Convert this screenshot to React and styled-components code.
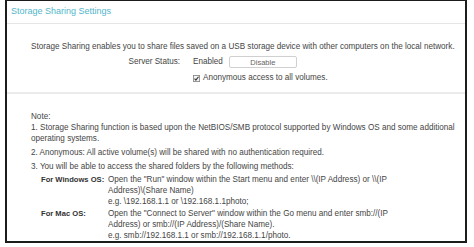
import React from 'react'
import styled, { createGlobalStyle } from 'styled-components'

const GlobalStyle = createGlobalStyle`
  html, body {
    margin: 0;
    padding: 0;
    background: #ffffff;
  }
  body {
    font-family: "Liberation Sans", Arial, sans-serif;
    color: #454545;
  }
`

const notes = [
  '1. Storage Sharing function is based upon the NetBIOS/SMB protocol supported by Windows OS and some additional operating systems.',
  '2. Anonymous: All active volume(s) will be shared with no authentication required.',
  '3. You will be able to access the shared folders by the following methods:',
]

const methods = [
  {
    os: 'For Windows OS:',
    lines: [
      'Open the "Run" window within the Start menu and enter \\\\(IP Address) or \\\\(IP',
      'Address)\\(Share Name)',
      'e.g. \\192.168.1.1 or \\192.168.1.1photo;',
    ],
  },
  {
    os: 'For Mac OS:',
    lines: [
      'Open the "Connect to Server" window within the Go menu and enter smb://(IP',
      'Address) or smb://(IP Address)/(Share Name).',
      'e.g. smb://192.168.1.1 or smb://192.168.1.1/photo.',
    ],
  },
]

export default function App() {
  return (
    <>
      <GlobalStyle />
      <Frame>
        <Header>
          <Title>Storage Sharing Settings</Title>
        </Header>
        <Settings>
          <Description>
            Storage Sharing enables you to share files saved on a USB storage device with other computers on the local network.
          </Description>
          <StatusGrid>
            <Label>Server Status:</Label>
            <StatusValue>
              <span>Enabled</span>
              <Button type="button">Disable</Button>
            </StatusValue>
            <span />
            <CheckRow>
              <CheckBox viewBox="0 0 8 8">
                <rect x="0.5" y="0.5" width="7" height="7" fill="#f4f4f4" stroke="#8a8a8a" />
                <path d="M1.8 4.2 L3.3 5.8 L6.3 2" fill="none" stroke="#333" strokeWidth="1.3" />
              </CheckBox>
              <span>Anonymous access to all volumes.</span>
            </CheckRow>
          </StatusGrid>
        </Settings>
        <Notes>
          <NoteTitle>Note:</NoteTitle>
          {notes.map((n, i) => (
            <NoteItem key={i} first={i === 0}>{n}</NoteItem>
          ))}
          <MethodGrid>
            {methods.map((m) => (
              <React.Fragment key={m.os}>
                <OsName>{m.os}</OsName>
                <MethodText>
                  {m.lines.map((l, i) => (
                    <div key={i}>{l}</div>
                  ))}
                </MethodText>
              </React.Fragment>
            ))}
          </MethodGrid>
        </Notes>
      </Frame>
    </>
  )
}

const Frame = styled.div`
  box-sizing: border-box;
  margin-left: 5px;
  width: 462px;
  height: 243px;
  border: 2px solid #1c1c1c;
  border-top-width: 1px;
  display: flex;
  flex-direction: column;
  overflow: hidden;
  font-size: 8.15px;
`

const Header = styled.div`
  height: 25px;
  padding-left: 4px;
  border-bottom: 1px solid #e6e6e6;
  box-sizing: border-box;
`

const Title = styled.div`
  font-size: 9px;
  line-height: 20px;
  color: #52b6c9;
`

const Settings = styled.div`
  padding: 17px 0 8px 24px;
  border-bottom: 2px solid #ebebeb;
`

const Description = styled.div`
  line-height: 12px;
  white-space: nowrap;
`

const StatusGrid = styled.div`
  display: grid;
  grid-template-columns: 149px auto;
  column-gap: 13px;
  row-gap: 3px;
  margin-top: 2px;
  align-items: center;
`

const Label = styled.div`
  text-align: right;
  line-height: 14px;
`

const StatusValue = styled.div`
  display: flex;
  align-items: center;
  gap: 6px;
  line-height: 14px;
`

const Button = styled.button`
  width: 68px;
  height: 12px;
  padding: 0;
  border: 1px solid #d0d0d0;
  border-radius: 2px;
  background: #ffffff;
  font-family: inherit;
  font-size: 7.5px;
  color: #666;
`

const CheckRow = styled.div`
  display: flex;
  align-items: center;
  gap: 3px;
  line-height: 12px;
`

const CheckBox = styled.svg`
  width: 7px;
  height: 7px;
`

const Notes = styled.div`
  padding: 17px 0 0 24px;
  line-height: 11px;
`

const NoteTitle = styled.div``

const NoteItem = styled.div`
  margin-top: ${(p) => (p.first ? '0' : '3px')};
  padding-right: 6px;
`

const MethodGrid = styled.div`
  display: grid;
  grid-template-columns: 67px auto;
  row-gap: 1px;
  margin-top: 2px;
  padding-left: 10px;
`

const OsName = styled.div`
  font-weight: bold;
  font-size: 7.6px;
  color: #333;
  white-space: nowrap;
`

const MethodText = styled.div`
  white-space: nowrap;
`
